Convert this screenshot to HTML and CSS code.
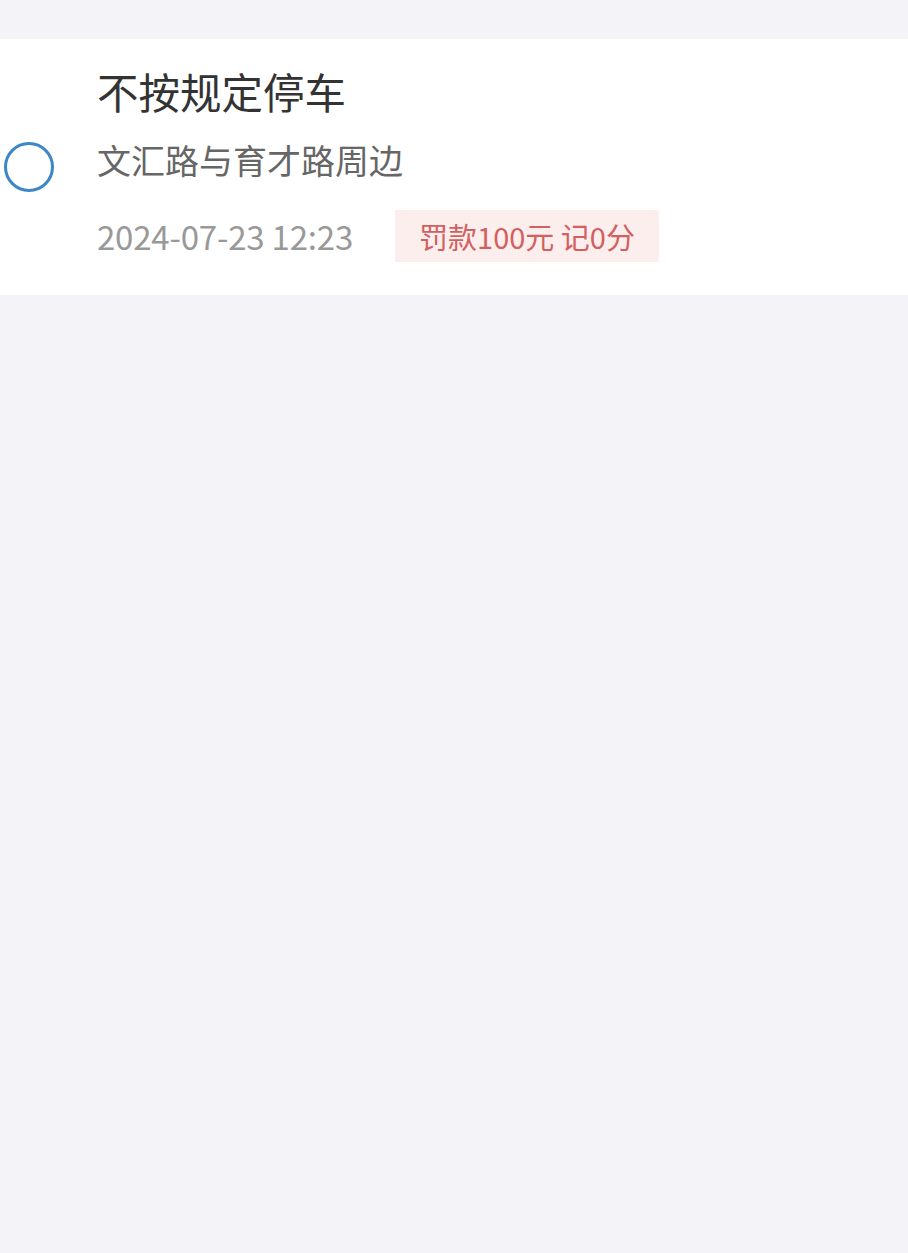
FILE: index.html
```html
<!DOCTYPE html>
<html lang="zh-CN">
<head>
  <meta charset="UTF-8">
  <title>违章记录</title>
  <link rel="stylesheet" href="styles.css">
</head>
<body>
  <div class="list">
    <div class="record">
      <span class="radio"></span>
      <div class="record-info">
        <div class="record-title">不按规定停车</div>
        <div class="record-place">文汇路与育才路周边</div>
        <div class="record-meta">
          <span class="record-time">2024-07-23 12:23</span>
          <span class="record-fine">罚款100元 记0分</span>
        </div>
      </div>
    </div>
  </div>
</body>
</html>
```

FILE: styles.css
```css
body {
  margin: 0;
  min-height: 100vh;
  background-color: #f3f3f8;
  font-family: "Noto Sans CJK SC", "Noto Sans", sans-serif;
}

.list {
  padding-top: 39px;
}

.record {
  display: flex;
  align-items: center;
  background-color: #fff;
}

.radio {
  box-sizing: border-box;
  width: 50px;
  height: 50px;
  margin-left: 4px;
  border: 3px solid #3d86c7;
  border-radius: 50%;
}

.record-info {
  margin-left: 43px;
  padding: 26px 0 33px;
}

.record-title {
  font-size: 41.5px;
  line-height: 53px;
  color: #333;
}

.record-place {
  margin-top: 20px;
  font-size: 34px;
  line-height: 44px;
  color: #666;
}

.record-meta {
  display: flex;
  align-items: center;
  margin-top: 28px;
}

.record-time {
  font-size: 33px;
  letter-spacing: -0.2px;
  color: #999;
}

.record-fine {
  margin-left: 42px;
  padding: 0 24px;
  height: 52px;
  line-height: 52px;
  font-size: 29px;
  color: #d2605f;
  background-color: #fdeeee;
}
```
